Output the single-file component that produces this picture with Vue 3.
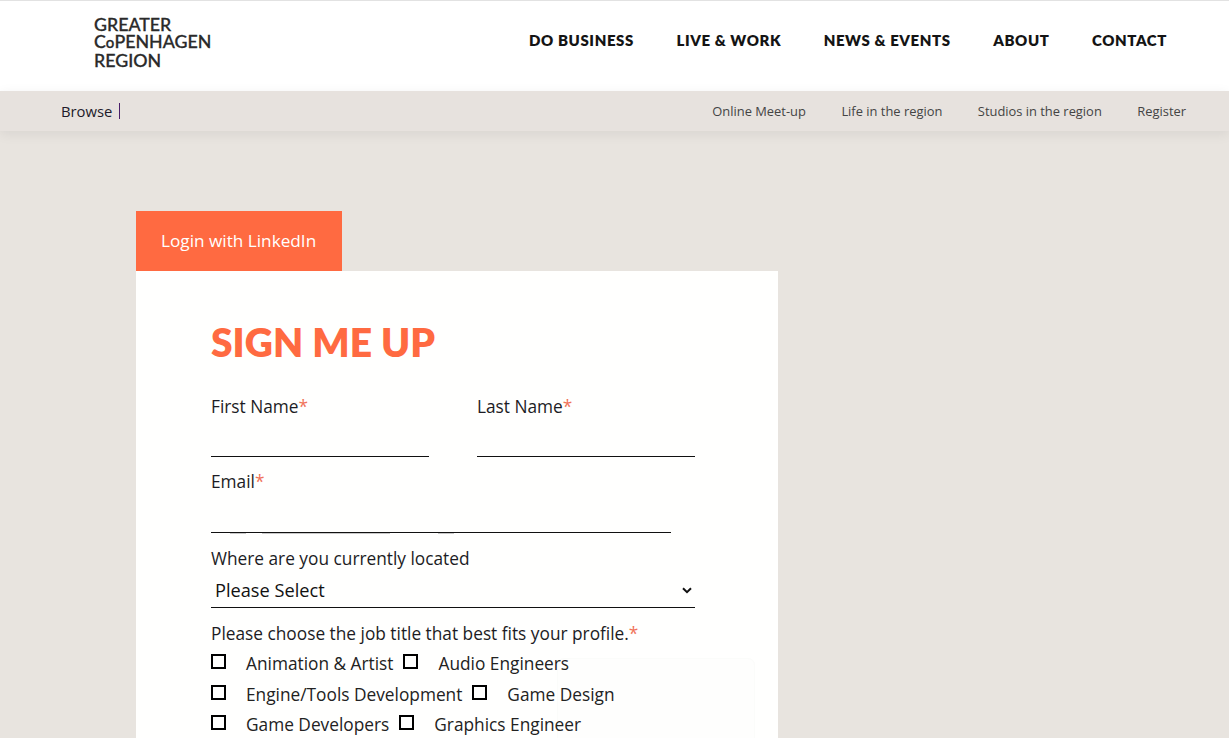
<script setup>
const navItems = ['DO BUSINESS', 'LIVE & WORK', 'NEWS & EVENTS', 'ABOUT', 'CONTACT']
const subItems = ['Online Meet-up', 'Life in the region', 'Studios in the region', 'Register']
const jobRows = [
  ['Animation & Artist', 'Audio Engineers'],
  ['Engine/Tools Development', 'Game Design'],
  ['Game Developers', 'Graphics Engineer']
]
</script>

<template>
  <div class="page">
    <header class="topbar">
      <div class="logo">GREATER<br />C<span class="small-o">o</span>PENHAGEN<br />REGION</div>
      <nav class="main-nav">
        <a v-for="item in navItems" :key="item">{{ item }}</a>
      </nav>
    </header>
    <div class="subbar">
      <div class="browse">Browse <i class="caret"></i></div>
      <nav class="sub-nav">
        <a v-for="item in subItems" :key="item">{{ item }}</a>
      </nav>
    </div>
    <main class="content">
      <a class="linkedin">Login with LinkedIn</a>
      <form class="card">
        <div class="ghost"></div>
        <h1>SIGN ME UP</h1>
        <div class="two">
          <div class="field">
            <label>First Name<em>*</em></label>
            <div class="line"></div>
          </div>
          <div class="field">
            <label>Last Name<em>*</em></label>
            <div class="line"></div>
          </div>
        </div>
        <div class="field email">
          <label>Email<em>*</em></label>
          <div class="line">
            <i class="seg seg-a"></i>
            <i class="seg seg-b"></i>
            <i class="seg seg-c"></i>
          </div>
        </div>
        <div class="location">
          <label>Where are you currently located</label>
          <div class="select">
            <span>Please Select</span>
            <svg width="10" height="7" viewBox="0 0 10 7"><path d="M1 1.2 5 5.2 9 1.2" fill="none" stroke="#111" stroke-width="2" /></svg>
          </div>
        </div>
        <div class="jobs">
          <label>Please choose the job title that best fits your profile.<em>*</em></label>
          <div v-for="row in jobRows" :key="row[0]" class="job-row">
            <template v-for="job in row" :key="job">
              <i class="box"></i>
              <span class="job">{{ job }}</span>
            </template>
          </div>
        </div>
      </form>
    </main>
  </div>
</template>

<style>
html, body { margin: 0; overflow: hidden; }
</style>

<style scoped>
.page {
  height: 738px;
  overflow: hidden;
  background: #e8e4df;
  font-family: "Open Sans", sans-serif;
  color: #1c1c24;
}
.topbar {
  height: 90px;
  border-top: 1px solid #e2e2e2;
  background: #fff;
  display: flex;
  justify-content: space-between;
  align-items: center;
  padding: 0 62px 0 94px;
}
.logo {
  font-family: Lato, sans-serif;
  font-size: 17.8px;
  line-height: 17.3px;
  font-weight: 500;
  color: #2a2a2a;
  -webkit-text-stroke: 0.3px #2a2a2a;
  margin-top: -7px;
}
.small-o { font-size: 15px; }
.main-nav { display: flex; gap: 42.5px; margin-top: -13px; }
.main-nav a {
  font-family: Lato, sans-serif;
  font-weight: 800;
  font-size: 15px;
  letter-spacing: 0.6px;
  color: #141414;
}
.subbar {
  height: 40px;
  background: #e7e2de;
  box-shadow: 0 3px 12px rgba(0, 0, 0, 0.07);
  display: flex;
  justify-content: space-between;
  align-items: center;
  padding: 0 43px 0 61px;
  position: relative;
}
.browse { font-size: 14.8px; color: #221a2a; display: flex; align-items: center; gap: 7px; }
.caret { display: block; width: 1px; height: 16px; background: #4a1f6a; }
.sub-nav { display: flex; gap: 35.5px; }
.sub-nav a { font-size: 12.9px; color: #444; }
.content { padding: 80px 0 0 136px; }
.linkedin {
  display: block;
  width: 206px;
  height: 60px;
  box-sizing: border-box;
  background: #ff6a41;
  color: #fff;
  font-size: 17.2px;
  line-height: 60px;
  padding-left: 25px;
}
.card {
  width: 642px;
  box-sizing: border-box;
  background: #fffffe;
  padding: 47px 0 0 75px;
  height: 480px;
  position: relative;
}
.ghost {
  position: absolute;
  left: 421px;
  top: 387px;
  width: 196px;
  height: 120px;
  border: 1px solid #fbfcfa;
  border-radius: 7px;
  background: #fefefd;
}
h1 {
  margin: 0;
  font-family: Lato, sans-serif;
  font-weight: 800;
  font-size: 39px;
  line-height: 48px;
  color: #ff6a41;
}
label { display: block; font-size: 17.3px; line-height: 24px; color: #1c1c24; position: relative; }
em { font-style: normal; color: #f0735a; }
.two { display: flex; gap: 48px; margin-top: 29px; }
.two .field { width: 218px; }
.field label { margin-bottom: 38px; }
.two .field label { margin-bottom: 37px; }
.line { border-bottom: 1px solid #111; height: 0; position: relative; }
.seg { position: absolute; top: 1px; height: 1px; background: #c8c8c8; }
.seg-a { left: 19px; width: 16px; }
.seg-b { left: 51px; width: 128px; }
.seg-c { left: 227px; width: 16px; }
.email { width: 460px; margin-top: 13px; }
.location { width: 484px; margin-top: 14px; }
.select {
  border-bottom: 1px solid #111;
  display: flex;
  align-items: center;
  justify-content: space-between;
  padding: 2px 3px 0 4px;
  font-size: 18.2px;
  color: #111;
  box-sizing: border-box;
  height: 37px;
}
.jobs { margin-top: 14px; position: relative; }
.job-row { display: flex; align-items: flex-start; height: 30.5px; position: relative; }
.box {
  display: block;
  width: 11px;
  height: 11px;
  border: 2px solid #000;
  margin-top: 8px;
  margin-right: 20px;
}
.job { font-size: 17.3px; line-height: 24px; margin-top: 6px; margin-right: 10px; color: #222; }
</style>
